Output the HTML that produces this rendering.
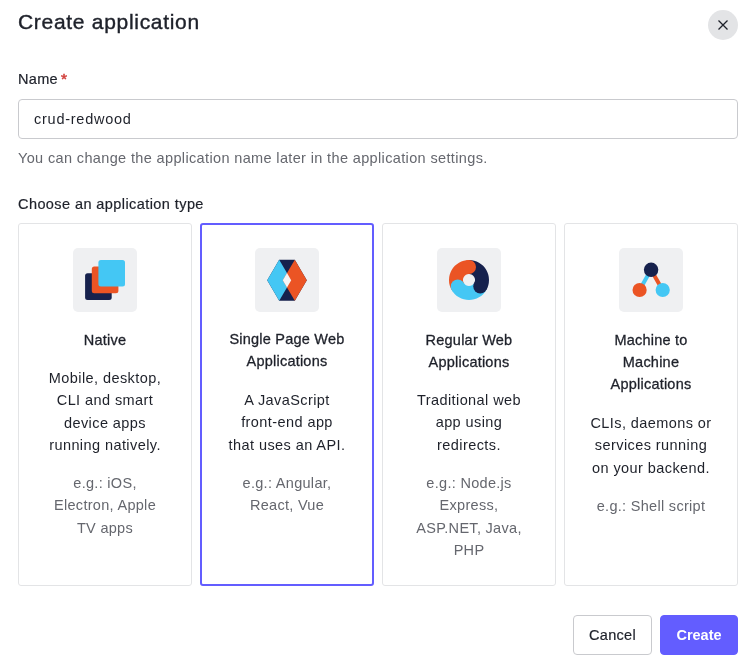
<!DOCTYPE html>
<html><head><meta charset="utf-8">
<style>
*{box-sizing:border-box;margin:0;padding:0}
html,body{width:753px;height:671px;background:#fff;overflow:hidden}
body{font-family:"Liberation Sans",sans-serif;color:#1e212a;position:relative}
.wrap{position:absolute;left:0;top:0;width:753px;height:671px;will-change:transform}
.abs{position:absolute;white-space:nowrap}
.title{left:18px;top:9px;font-size:21px;line-height:26px;color:#1e212a;letter-spacing:0.7px;-webkit-text-stroke:0.4px #1e212a}
.close{left:708px;top:10px;width:30px;height:30px;border-radius:50%;background:#e3e4e6}
.close svg{position:absolute;left:9px;top:9px}
.label{left:18px;top:70px;font-size:14.5px;line-height:18px;color:#1e212a;letter-spacing:0.3px;-webkit-text-stroke:0.2px #1e212a}
.label .req{color:#d03c38;margin-left:3px;font-size:15.5px;position:relative;top:-0.5px;-webkit-text-stroke:0.5px #d03c38}
.input{left:18px;top:99px;width:720px;height:40px;border:1px solid #c9cace;border-radius:4px}
.input span{position:absolute;left:15px;top:10px;font-size:14.5px;line-height:18px;color:#1e212a;letter-spacing:0.75px}
.help{left:18px;top:149px;font-size:14.5px;line-height:18px;color:#65676e;letter-spacing:0.36px}
.choose{left:18px;top:195px;font-size:14.5px;line-height:18px;color:#1e212a;letter-spacing:0.42px;-webkit-text-stroke:0.2px #1e212a}
.card{position:absolute;top:223px;width:174px;height:363px;border:1px solid #e3e4e6;border-radius:3px;text-align:center}
.card.sel{border:2px solid #635dff}
.ic{position:absolute;left:54px;top:24px;width:64px;height:64px;border-radius:5px;background:#eff0f2}
.ic svg{position:absolute;left:0;top:0}
.sel .ic{left:53px;top:23px}
.txt{position:absolute;left:0;right:0;margin-top:1px;font-size:14.5px;line-height:22.4px;letter-spacing:0.42px;white-space:nowrap}
.t{top:103.5px;color:#1e212a;letter-spacing:0.22px;-webkit-text-stroke:0.3px #1e212a}
.d{color:#1e212a}
.e{color:#65676e;letter-spacing:0.3px}
.btn{position:absolute;top:615px;height:40px;border-radius:4px;font-size:14.5px;line-height:38px;text-align:center;letter-spacing:0.3px}
.cancel{left:573px;width:79px;border:1px solid #c9cace;color:#1e212a;background:#fff;-webkit-text-stroke:0.2px #1e212a}
.create{left:660px;width:78px;background:#635dff;color:#fff;font-weight:bold;border:1px solid #635dff;letter-spacing:0}
</style></head>
<body><div class="wrap">
<div class="abs title">Create application</div>
<div class="abs close"><svg width="12" height="12" viewBox="0 0 12 12"><path d="M1.5 1.5L10.5 10.5M10.5 1.5L1.5 10.5" stroke="#1e212a" stroke-width="1.3" fill="none"/></svg></div>
<div class="abs label">Name<span class="req">*</span></div>
<div class="abs input"><span>crud-redwood</span></div>
<div class="abs help">You can change the application name later in the application settings.</div>
<div class="abs choose">Choose an application type</div>

<div class="card" style="left:18px">
  <div class="ic"><svg width="64" height="64" viewBox="0 0 64 64">
    <rect x="12.1" y="25.3" width="26.6" height="26.6" rx="2.5" fill="#16214d"/>
    <rect x="18.8" y="18.6" width="26.6" height="26.6" rx="2.5" fill="#eb5424"/>
    <rect x="25.4" y="11.9" width="26.6" height="26.6" rx="2.5" fill="#44c7f4"/>
  </svg></div>
  <div class="txt t">Native</div>
  <div class="txt d" style="top:142px">Mobile, desktop,<br>CLI and smart<br>device apps<br>running natively.</div>
  <div class="txt e" style="top:247px">e.g.: iOS,<br>Electron, Apple<br>TV apps</div>
</div>
<div class="card sel" style="left:200px">
  <div class="ic"><svg width="64" height="64" viewBox="0 0 64 64">
    <path d="M24.2 11.8H39.8L51.8 32.3L39.8 52.8H24.2L12.2 32.3Z" fill="#16214d"/>
    <path d="M24.2 11.8L36.2 32.3L24.2 52.8L12.2 32.3Z" fill="#44c7f4"/>
    <path d="M39.8 11.8L51.8 32.3L39.8 52.8L27.8 32.3Z" fill="#eb5424"/>
    <path d="M32 25.1L36.2 32.3L32 39.5L27.8 32.3Z" fill="#f4f5f7"/>
  </svg></div>
  <div class="txt t" style="top:102px">Single Page Web<br>Applications</div>
  <div class="txt d" style="top:163px">A JavaScript<br>front-end app<br>that uses an API.</div>
  <div class="txt e" style="top:246px">e.g.: Angular,<br>React, Vue</div>
</div>
<div class="card" style="left:382px">
  <div class="ic"><svg width="64" height="64" viewBox="0 0 64 64">
    <path d="M32.00 12.00A20 20 0 0 1 49.32 42.00L37.20 35.00A6 6 0 0 0 32.00 26.00Z" fill="#16214d"/><path d="M49.32 42.00A20 20 0 0 1 14.68 42.00L26.80 35.00A6 6 0 0 0 37.20 35.00Z" fill="#44c7f4"/><path d="M14.68 42.00A20 20 0 0 1 32.00 12.00L32.00 26.00A6 6 0 0 0 26.80 35.00Z" fill="#eb5424"/><circle cx="43.26" cy="38.50" r="7.0" fill="#16214d"/><circle cx="20.74" cy="38.50" r="7.0" fill="#44c7f4"/><circle cx="32.00" cy="19.00" r="7.0" fill="#eb5424"/>
  </svg></div>
  <div class="txt t">Regular Web<br>Applications</div>
  <div class="txt d" style="top:164px">Traditional web<br>app using<br>redirects.</div>
  <div class="txt e" style="top:247px">e.g.: Node.js<br>Express,<br>ASP.NET, Java,<br>PHP</div>
</div>
<div class="card" style="left:564px">
  <div class="ic"><svg width="64" height="64" viewBox="0 0 64 64">
    <line x1="32" y1="21.8" x2="20.6" y2="42" stroke="#44c7f4" stroke-width="4"/>
    <line x1="32" y1="21.8" x2="43.6" y2="42" stroke="#eb5424" stroke-width="4"/>
    <circle cx="32.1" cy="21.8" r="7.2" fill="#16214d"/>
    <circle cx="20.6" cy="42" r="7.1" fill="#eb5424"/>
    <circle cx="43.7" cy="42" r="7.1" fill="#44c7f4"/>
  </svg></div>
  <div class="txt t">Machine to<br>Machine<br>Applications</div>
  <div class="txt d" style="top:187px">CLIs, daemons or<br>services running<br>on your backend.</div>
  <div class="txt e" style="top:270px">e.g.: Shell script</div>
</div>

<div class="btn cancel">Cancel</div>
<div class="btn create">Create</div>
</div></body></html>
